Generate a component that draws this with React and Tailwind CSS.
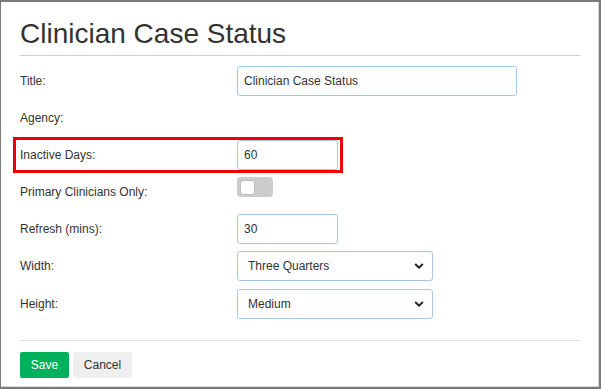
import React from "react";

const Chevron = () => (
  <svg width="10" height="7" viewBox="0 0 10 7" className="absolute right-[8px] top-1/2 -translate-y-1/2">
    <path d="M1.2 1.5 L5 5.2 L8.8 1.5" fill="none" stroke="#222" strokeWidth="2" />
  </svg>
);

function Row({ label, children, top }) {
  return (
    <div className={`flex h-[30px] ${top ? "items-start" : "items-center"}`}>
      <div className={`w-[217px] shrink-0 text-[12px] text-[#333] ${top ? "self-center" : ""}`}>{label}</div>
      {children}
    </div>
  );
}

const inputCls =
  "h-[30px] border border-[#a9c8e6] rounded-[3px] px-[6px] flex items-center text-[12px] text-[#333] bg-white";

export default function App() {
  return (
    <div
      className="w-[601px] h-[389px] bg-white border-t-2 border-l border-r-2 border-b-2 border-[#7a7a7a] overflow-hidden"
      style={{ fontFamily: '"Liberation Sans", Arial, sans-serif' }}
    >
      <div className="h-full border-r border-b border-[#d8d8d8] pl-[19px] pr-[18px] pt-[16px] relative">
        <div className="text-[28px] leading-[31px] text-[#333]">Clinician Case Status</div>
        <div className="mt-[6px] h-px bg-[#cfcfcf]" />
        <div className="mt-[10px] flex flex-col gap-[7px]">
          <Row label="Title:">
            <div className={`${inputCls} w-[280px]`}>Clinician Case Status</div>
          </Row>
          <Row label="Agency:" />
          <Row label="Inactive Days:">
            <div className={`${inputCls} w-[101px]`}>60</div>
          </Row>
          <Row label="Primary Clinicians Only:" top>
            <div className="w-[36px] h-[20px] rounded-[4px] bg-[#cccccc] flex items-center pl-[3px]">
              <div className="w-[15px] h-[15px] rounded-[3px] bg-white border border-[#bdbdbd]" />
            </div>
          </Row>
          <Row label="Refresh (mins):">
            <div className={`${inputCls} w-[101px]`}>30</div>
          </Row>
          <Row label="Width:">
            <div className={`${inputCls} w-[196px] relative pl-[10px]`}>
              Three Quarters
              <Chevron />
            </div>
          </Row>
          <div className="pt-px">
            <Row label="Height:">
              <div className={`${inputCls} w-[196px] relative pl-[10px]`}>
                Medium
                <Chevron />
              </div>
            </Row>
          </div>
        </div>
        <div className="mt-[21px] h-px bg-[#e0e0e0]" />
        <div className="mt-[11px] flex gap-[4px]">
          <div className="w-[49px] h-[26px] rounded-[2px] bg-[#00b15b] text-white text-[12px] flex items-center justify-center">
            Save
          </div>
          <div className="w-[59px] h-[26px] rounded-[2px] bg-[#efefef] text-[#333] text-[12px] flex items-center justify-center">
            Cancel
          </div>
        </div>
        <div className="absolute left-[12px] top-[135px] w-[330px] h-[36px] border-[3px] border-[#ee0000]" />
      </div>
    </div>
  );
}
